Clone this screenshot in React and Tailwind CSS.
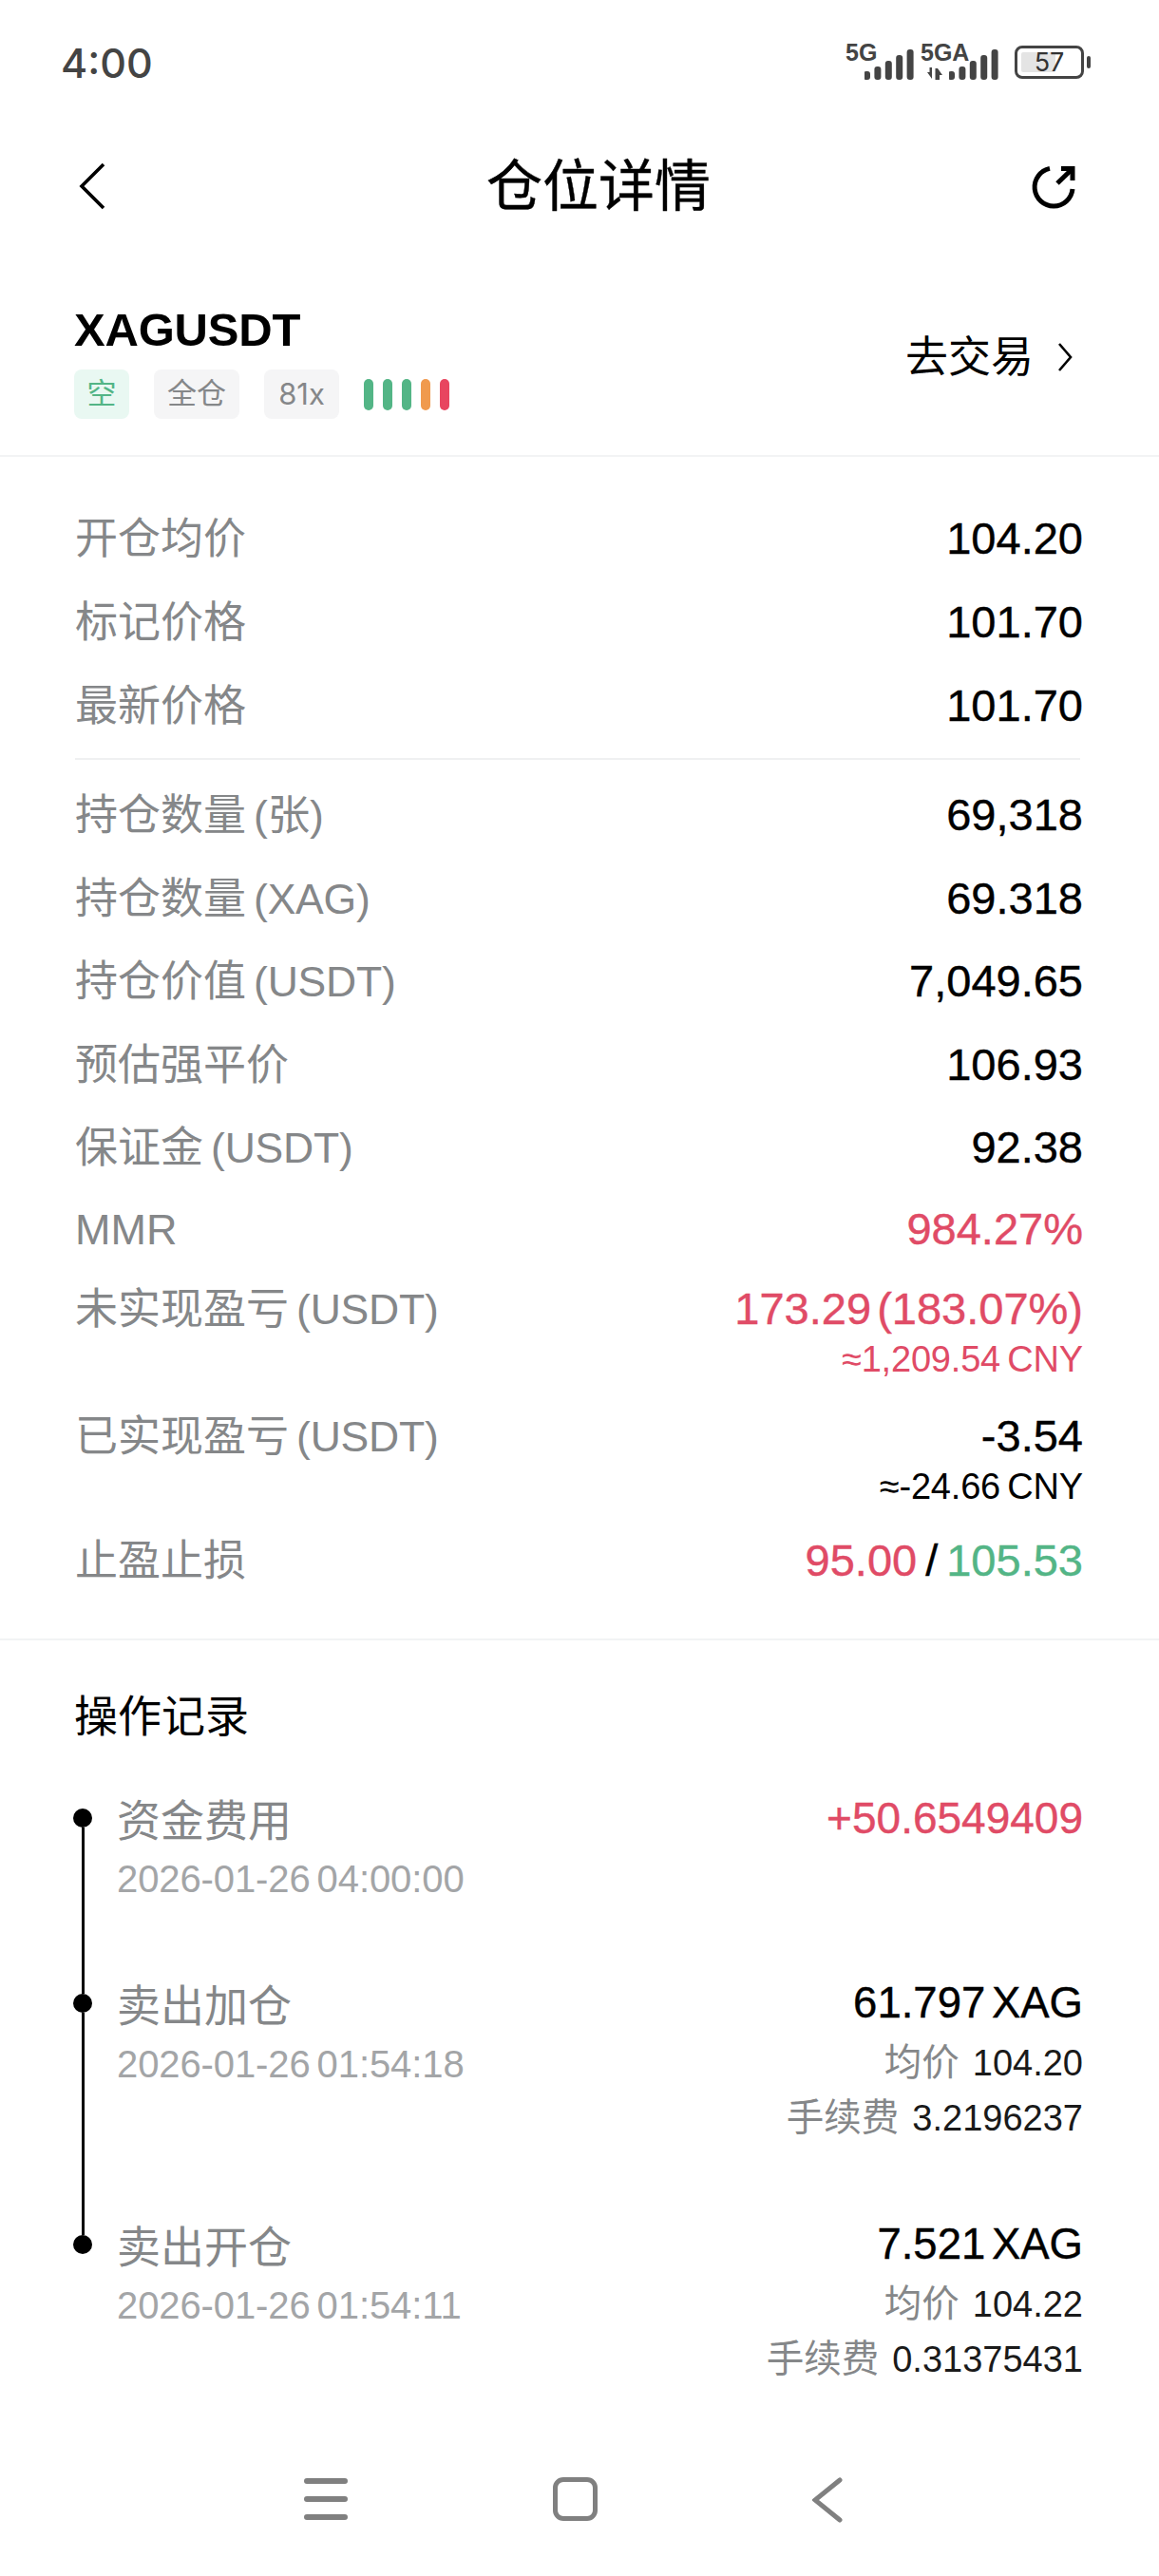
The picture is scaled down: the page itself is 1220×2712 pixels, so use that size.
const Row = ({ label, unit, children, sub, subColor = 'text-black', h = 'h-[88px]' }) => (
  <div className={`flex justify-between items-start ${h}`}>
    <div className="text-[45px] leading-[88px] mt-[1px] text-[#858789] whitespace-nowrap">
      {label}
      {unit && <span className="ml-[8px] text-[44.5px] tracking-[-0.2px]">{unit}</span>}
    </div>
    <div className="text-right">
      <div className="text-[47px] leading-[88px] text-black whitespace-nowrap [word-spacing:-7px] [-webkit-text-stroke:0.4px]">{children}</div>
      {sub && <div className={`text-[38px] leading-[37px] -mt-[9px] tracking-[-0.2px] [word-spacing:-3px] whitespace-nowrap ${subColor}`}>{sub}</div>}
    </div>
  </div>
);

const SignalBars = ({ width, heights }) => (
  <svg width={width} height="34" viewBox={`0 0 ${width} 34`} fill="#444">
    {heights.map((b, i) => (
      <rect key={i} x={width - (heights.length - i) * 11.4 + 4} y={34 - b} width="7" height={b} rx="3" />
    ))}
  </svg>
);

const TimelineItem = ({ title, date, last, h, children }) => (
  <div className={`flex ${h}`}>
    <div className="w-[20px] flex flex-col items-center shrink-0">
      <div className="w-[20px] h-[20px] rounded-full bg-black mt-[26px] shrink-0" />
      {!last && <div className="w-[3px] flex-1 bg-black -mb-[26px]" />}
    </div>
    <div className="flex-1 flex justify-between ml-[26px]">
      <div>
        <div className="text-[46px] leading-[72px] mt-[3px] text-[#858789]">{title}</div>
        <div className="text-[40px] leading-[46px] mt-[2px] text-[#a3a5a7] tracking-[-0.1px] [word-spacing:-4px] whitespace-nowrap">{date}</div>
      </div>
      <div className="text-right">{children}</div>
    </div>
  </div>
);

const SubLine = ({ label, value }) => (
  <div className="text-[38px] leading-[58px] -mt-[1px] first-of-type:mt-0 text-[#1a1a1a] whitespace-nowrap">
    <span className="text-[39.5px] text-[#858789] mr-[14px]">{label}</span>
    {value}
  </div>
);

export default function App() {
  return (
    <div className="w-[1220px] h-[2712px] bg-white overflow-hidden flex flex-col font-['Liberation_Sans','Noto_Sans_CJK_SC',sans-serif]">
      {/* status bar */}
      <div className="h-[132px] shrink-0 flex justify-between pl-[64px] pr-[72px] pt-[36px]">
        <span className="font-['Inter','Liberation_Sans',sans-serif] text-[43px] leading-[60px] font-medium text-[#444]">4:00</span>
        <div className="flex items-start pt-[12px] text-[#444]">
          <div className="relative w-[70px] h-[36px]">
            <span className="absolute -left-[2px] -top-[6px] text-[25px] leading-[26px] font-bold">5G</span>
            <div className="absolute right-0 top-[2px]"><SignalBars width={52} heights={[9, 14, 20, 26, 32]} /></div>
          </div>
          <div className="relative w-[80px] h-[36px] ml-[9px]">
            <span className="absolute -left-[2px] -top-[6px] text-[25px] leading-[26px] font-bold">5GA</span>
            <div className="absolute right-0 top-[2px]"><SignalBars width={52} heights={[9, 14, 20, 26, 32]} /></div>
            <svg className="absolute left-[5px] bottom-0" width="16" height="13" viewBox="0 0 16 13" fill="#444">
              <path d="M0 5h2.5V0h2.5v12zM8.5 13V1h2.500l5 7H13v5z" />
            </svg>
          </div>
          <div className="ml-[17px] w-[73px] h-[35px] border-[3px] border-[#444] rounded-[8px] relative flex items-center justify-center">
            <div className="absolute left-[4px] top-[4px] bottom-[4px] w-[36px] bg-[#e4e4e4] rounded-[2px]" />
            <span className="relative text-[27px] leading-none text-[#333] font-['Inter',sans-serif]">57</span>
          </div>
          <div className="ml-[3px] mt-[11px] w-[4px] h-[13px] bg-[#444] rounded-[2px]" />
        </div>
      </div>

      {/* header */}
      <div className="h-[128px] shrink-0 flex items-center pl-[82px] pr-[87px]">
        <svg width="30" height="50" viewBox="0 0 30 50" fill="none" stroke="#000" strokeWidth="3.6">
          <path d="M27 2 L4 25 L27 48" />
        </svg>
        <div className="ml-[400px] text-[59px] leading-none mt-[2px] text-black whitespace-nowrap [-webkit-text-stroke:0.4px]">仓位详情</div>
        <svg className="ml-auto" width="50" height="50" viewBox="0 0 50 50" fill="none" stroke="#000" strokeWidth="5">
          <path d="M22 6.400 A20 20 0 1 0 46 28" />
          <path d="M34 6.500 H46 V19" />
          <path d="M30 22 L45 7.500" />
        </svg>
      </div>

      {/* symbol */}
      <div className="h-[221px] shrink-0 flex justify-between pl-[78px] pr-[90px] pt-[58px] border-b-2 border-[#f2f3f4]">
        <div>
          <div className="text-[49px] leading-[58px] font-bold text-black tracking-[-0.2px]">XAGUSDT</div>
          <div className="flex items-center mt-[13px]">
            <span className="w-[58px] h-[52px] rounded-[8px] bg-[#e9f8f2] text-[#53b586] text-[31px] flex items-center justify-center">空</span>
            <span className="ml-[26px] w-[90px] h-[52px] rounded-[8px] bg-[#f5f5f6] text-[#858789] text-[31px] flex items-center justify-center">全仓</span>
            <span className="ml-[26px] w-[79px] h-[52px] rounded-[8px] bg-[#f5f5f6] text-[#858789] text-[31px] font-['Inter',sans-serif] flex items-center justify-center">81x</span>
            <div className="ml-[26px] flex gap-[10px]">
              {['bg-[#53b586]', 'bg-[#53b586]', 'bg-[#53b586]', 'bg-[#f09a4e]', 'bg-[#e8455f]'].map((c, i) => (
                <span key={i} className={`w-[10px] h-[33px] rounded-full ${c}`} />
              ))}
            </div>
          </div>
        </div>
        <div className="flex items-center h-[84px] mt-[12px] pt-[8px]">
          <span className="text-[45px] leading-none text-black">去交易</span>
          <svg className="ml-[24px]" width="18" height="32" viewBox="0 0 18 32" fill="none" stroke="#000" strokeWidth="2.6">
            <path d="M3 2 L15 16 L3 30" />
          </svg>
        </div>
      </div>

      {/* details */}
      <div className="h-[1246px] shrink-0 border-b-2 border-[#f2f3f4] pl-[79px] pr-[80px] pt-[42px]">
        <Row label="开仓均价">104.20</Row>
        <Row label="标记价格">101.70</Row>
        <Row label="最新价格">101.70</Row>
        <div className="h-[2px] bg-[#eff0f1] mt-[11px] mb-[14px] mr-[3px]" />
        <Row label="持仓数量" unit="(张)">69,318</Row>
        <Row label="持仓数量" unit="(XAG)" h="h-[87px]">69.318</Row>
        <Row label="持仓价值" unit="(USDT)">7,049.65</Row>
        <Row label="预估强平价" h="h-[87px]">106.93</Row>
        <Row label="保证金" unit="(USDT)" h="h-[86px]">92.38</Row>
        <Row label="MMR" h="h-[84px]"><span className="text-[#e04b66]">984.27%</span></Row>
        <Row label="未实现盈亏" unit="(USDT)" sub="≈1,209.54 CNY" subColor="text-[#e04b66]" h="h-[134px]">
          <span className="text-[#e04b66]">173.29 (183.07%)</span>
        </Row>
        <Row label="已实现盈亏" unit="(USDT)" sub="≈-24.66 CNY" h="h-[131px]">-3.54</Row>
        <Row label="止盈止损">
          <span className="text-[#e04b66]">95.00</span>
          <span className="mx-[9px]">/</span>
          <span className="text-[#53b586]">105.53</span>
        </Row>
      </div>

      {/* records */}
      <div className="flex-1 pl-[77px] pr-[80px] pt-[52px]">
        <div className="text-[46px] leading-[56px] ml-[1px] text-black">操作记录</div>
        <div className="mt-[43px]">
          <TimelineItem title="资金费用" date="2026-01-26 04:00:00" h="h-[195px]">
            <div className="text-[46px] leading-[72px] text-[#e04b66] whitespace-nowrap [-webkit-text-stroke:0.4px]">+50.6549409</div>
          </TimelineItem>
          <TimelineItem title="卖出加仓" date="2026-01-26 01:54:18" h="h-[254px]">
            <div className="text-[45.5px] leading-[72px] text-black whitespace-nowrap [word-spacing:-6px] [-webkit-text-stroke:0.4px]">61.797 XAG</div>
            <div className="-mt-[3px]">
              <SubLine label="均价" value="104.20" />
              <SubLine label="手续费" value="3.2196237" />
            </div>
          </TimelineItem>
          <TimelineItem title="卖出开仓" date="2026-01-26 01:54:11" h="h-[200px]" last>
            <div className="text-[45.5px] leading-[72px] text-black whitespace-nowrap [word-spacing:-6px] [-webkit-text-stroke:0.4px]">7.521 XAG</div>
            <div className="-mt-[3px]">
              <SubLine label="均价" value="104.22" />
              <SubLine label="手续费" value="0.31375431" />
            </div>
          </TimelineItem>
        </div>
      </div>

      {/* nav bar */}
      <div className="h-[160px] shrink-0 flex items-start pt-[56px] pl-[320px]">
        <svg width="46" height="46" viewBox="0 0 46 46" fill="none" stroke="#808080" strokeWidth="6" strokeLinecap="round">
          <path d="M3 4 H43 M3 23 H43 M3 42 H43" />
        </svg>
        <div className="ml-[216px] w-[47px] h-[46px] border-[5px] border-[#808080] rounded-[11px]" />
        <svg className="ml-[226px]" width="32" height="48" viewBox="0 0 32 48" fill="none" stroke="#808080" strokeWidth="5" strokeLinecap="round">
          <path d="M29 3 L3 24 L29 45" />
        </svg>
      </div>
    </div>
  );
}
